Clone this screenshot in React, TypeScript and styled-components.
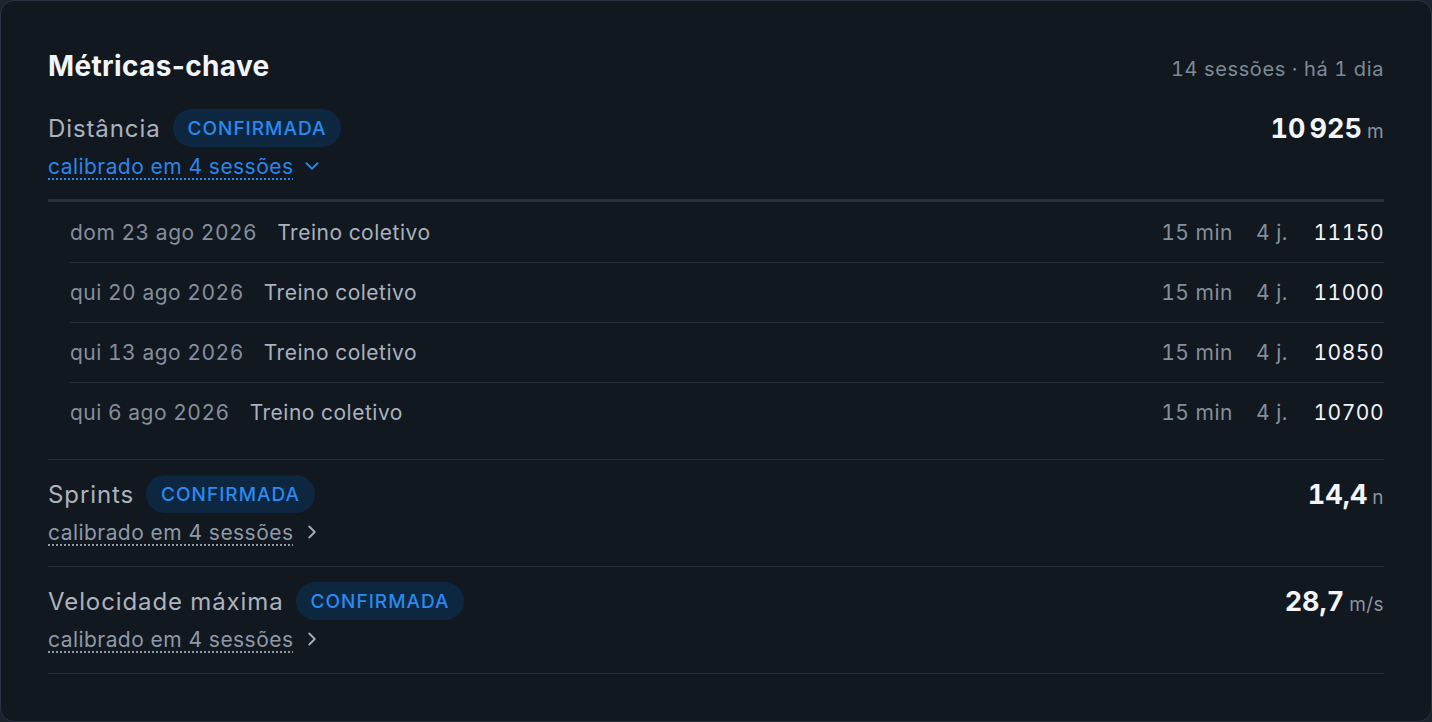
import styled, { createGlobalStyle } from 'styled-components';
import { ChevronDown, ChevronRight } from 'lucide-react';

interface Session {
  date: string;
  kind: string;
  duration: string;
  players: string;
  value: string;
}

interface Metric {
  label: string;
  value: string;
  unit: string;
  expanded?: boolean;
  sessions?: Session[];
}

const GlobalStyle = createGlobalStyle`
  html, body {
    margin: 0;
    padding: 0;
    background: #1c232d;
  }
  body {
    font-family: Inter, "Noto Sans", "Liberation Sans", sans-serif;
    font-variant-numeric: tabular-nums;
    -webkit-font-smoothing: antialiased;
  }
`;

const Card = styled.section`
  box-sizing: border-box;
  width: 1432px;
  height: 722px;
  background: #12181f;
  border: 1px solid #2b3342;
  border-radius: 14px;
  padding: 47px 47px 0;
  display: flex;
  flex-direction: column;
`;

const CardHeader = styled.header`
  display: flex;
  align-items: baseline;
  justify-content: space-between;
  margin-bottom: 24px;
`;

const Title = styled.h2`
  margin: 0;
  font-size: 28px;
  line-height: 37px;
  font-weight: 700;
  font-variant-numeric: normal;
  letter-spacing: 0.35px;
  color: #f1f4f8;
`;

const Meta = styled.span`
  font-size: 20px;
  letter-spacing: 0.6px;
  color: #7f8a97;
`;

const MetricBlock = styled.div<{ $first?: boolean }>`
  padding-top: ${(p) => (p.$first ? '0' : '15px')};
  border-bottom: 1px solid #262f3c;
`;

const MetricHead = styled.div`
  display: flex;
  align-items: center;
  justify-content: space-between;
  height: 38px;
`;

const LabelGroup = styled.div`
  display: flex;
  align-items: center;
  gap: 12px;
`;

const Label = styled.span`
  font-size: 24px;
  letter-spacing: 0.9px;
  color: #aab3bf;
`;

const Badge = styled.span`
  display: inline-flex;
  align-items: center;
  height: 38px;
  padding: 0 15px;
  border-radius: 19px;
  background: #0e2740;
  color: #2a8af0;
  font-size: 19px;
  font-weight: 500;
  letter-spacing: 1px;
`;

const ValueGroup = styled.div`
  display: flex;
  align-items: baseline;
  gap: 5px;
`;

const Value = styled.span`
  font-size: 27px;
  font-weight: 700;
  color: #f3f5f8;
`;

const Unit = styled.span`
  font-size: 19px;
  letter-spacing: 0.4px;
  color: #8a95a2;
`;

const CalibLink = styled.button<{ $active?: boolean }>`
  display: inline-flex;
  align-items: center;
  gap: 8px;
  margin: 5px 0 ${(p) => (p.$active ? '19px' : '20px')};
  padding: 0;
  height: 28px;
  background: none;
  border: 0;
  font-family: inherit;
  font-size: 21px;
  letter-spacing: 0.45px;
  color: ${(p) => (p.$active ? '#2a86ea' : '#8e99a6')};
  cursor: pointer;

  span {
    text-decoration: underline dotted;
    text-decoration-thickness: 2px;
    text-underline-offset: 5px;
  }

  svg {
    color: ${(p) => (p.$active ? '#2a86ea' : '#a4adb8')};
  }
`;

const SessionList = styled.div`
  border-top: 3px solid #29323f;
  padding: 1px 0 17px 22px;
`;

const SessionRow = styled.div`
  display: flex;
  align-items: center;
  height: 59px;
  font-size: 21px;
  letter-spacing: 0.5px;
  border-bottom: 1px solid #262f3c;

  &:last-child {
    border-bottom: 0;
  }
`;

const SessionDate = styled.span`
  color: #848f9c;
  margin-right: 20px;
`;

const SessionKind = styled.span`
  color: #a9b2bd;
  flex: 1;
`;

const SessionStat = styled.span`
  color: #848f9c;
  margin-left: 23px;
`;

const SessionValue = styled.span`
  color: #f0f3f7;
  width: 74px;
  margin-left: 22px;
  text-align: right;
`;

const metrics: Metric[] = [
  {
    label: 'Distância',
    value: '10\u202F925',
    unit: 'm',
    expanded: true,
    sessions: [
      { date: 'dom 23 ago 2026', kind: 'Treino coletivo', duration: '15 min', players: '4 j.', value: '11150' },
      { date: 'qui 20 ago 2026', kind: 'Treino coletivo', duration: '15 min', players: '4 j.', value: '11000' },
      { date: 'qui 13 ago 2026', kind: 'Treino coletivo', duration: '15 min', players: '4 j.', value: '10850' },
      { date: 'qui 6 ago 2026', kind: 'Treino coletivo', duration: '15 min', players: '4 j.', value: '10700' },
    ],
  },
  { label: 'Sprints', value: '14,4', unit: 'n' },
  { label: 'Velocidade máxima', value: '28,7', unit: 'm/s' },
];

function App() {
  return (
    <>
      <GlobalStyle />
      <Card>
        <CardHeader>
          <Title>Métricas-chave</Title>
          <Meta>14 sessões · há 1 dia</Meta>
        </CardHeader>
        {metrics.map((m, i) => (
          <MetricBlock key={m.label} $first={i === 0}>
            <MetricHead>
              <LabelGroup>
                <Label>{m.label}</Label>
                <Badge>CONFIRMADA</Badge>
              </LabelGroup>
              <ValueGroup>
                <Value>{m.value}</Value>
                <Unit>{m.unit}</Unit>
              </ValueGroup>
            </MetricHead>
            <CalibLink $active={m.expanded}>
              <span>calibrado em 4 sessões</span>
              {m.expanded ? <ChevronDown size={22} strokeWidth={2} /> : <ChevronRight size={22} strokeWidth={2} />}
            </CalibLink>
            {m.sessions && (
              <SessionList>
                {m.sessions.map((s) => (
                  <SessionRow key={s.date}>
                    <SessionDate>{s.date}</SessionDate>
                    <SessionKind>{s.kind}</SessionKind>
                    <SessionStat>{s.duration}</SessionStat>
                    <SessionStat>{s.players}</SessionStat>
                    <SessionValue>{s.value}</SessionValue>
                  </SessionRow>
                ))}
              </SessionList>
            )}
          </MetricBlock>
        ))}
      </Card>
    </>
  );
}

export default App;
